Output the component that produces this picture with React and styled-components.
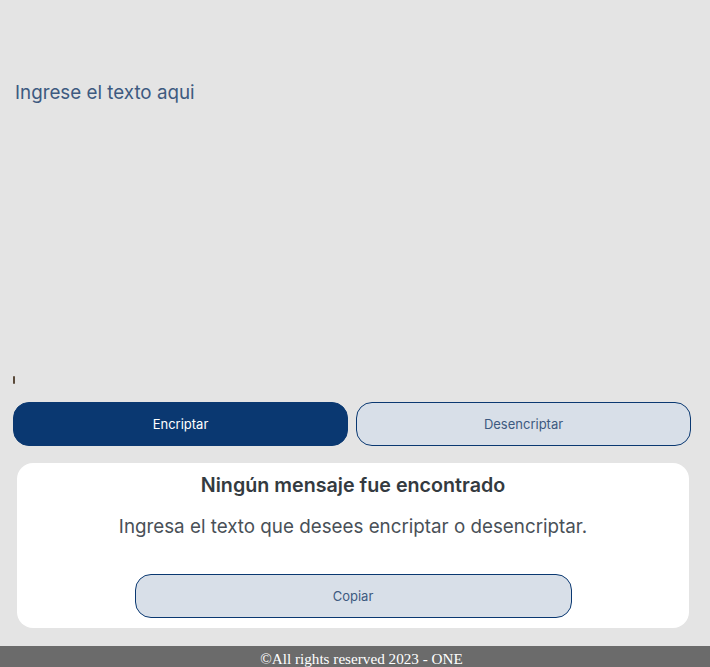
import React from "react";
import styled, { createGlobalStyle } from "styled-components";

const GlobalStyle = createGlobalStyle`
  html, body {
    margin: 0;
    padding: 0;
    background: #e4e4e4;
    font-family: Inter, "Noto Sans", sans-serif;
  }
`;

const Page = styled.div`
  display: flex;
  flex-direction: column;
  min-height: 667px;
`;

const Main = styled.main`
  flex: 1;
  display: flex;
  flex-direction: column;
  padding: 81px 19px 0 13px;
`;

const TextInput = styled.textarea`
  height: 288px;
  margin: 0 0 0 2px;
  padding: 0;
  border: none;
  outline: none;
  resize: none;
  background: transparent;
  font-family: Inter, sans-serif;
  font-size: 18.8px;
  line-height: 24px;
  color: #0a3871;
  &::placeholder {
    color: #3d5a80;
  }
`;

const Hint = styled.span`
  display: block;
  width: 2px;
  height: 8px;
  margin: 7px 0 0 0;
  border-radius: 1px;
  background: #5a4a3a;
`;

const ButtonRow = styled.div`
  display: grid;
  grid-template-columns: 1fr 1fr;
  gap: 8px;
  margin-top: 18px;
`;

const Button = styled.button`
  height: 44px;
  border-radius: 16px;
  border: 1px solid #0a3871;
  background: ${(p) => (p.$primary ? "#0a3871" : "#d8dfe8")};
  color: ${(p) => (p.$primary ? "#ffffff" : "#3d5a80")};
  font-family: Inter, sans-serif;
  font-size: 13px;
  cursor: pointer;
`;

const Card = styled.section`
  margin: 17px 2px 0 4px;
  background: #ffffff;
  border-radius: 16px;
  display: flex;
  flex-direction: column;
  align-items: center;
  padding: 10px 0 10px 0;
`;

const Title = styled.h2`
  margin: 0;
  font-size: 19.7px;
  line-height: 24px;
  font-weight: 600;
  color: #343a40;
`;

const Message = styled.p`
  margin: 18px 0 0 0;
  font-size: 18.8px;
  line-height: 24px;
  color: #495057;
`;

const CopyButton = styled(Button)`
  width: 437px;
  margin-top: 35px;
`;

const Footer = styled.footer`
  margin-top: 18px;
  height: 21px;
  padding-left: 13px;
  background: #6b6b6b;
  color: #ffffff;
  text-align: center;
  font-family: "Liberation Serif", serif;
  font-size: 15.2px;
  line-height: 26px;
  overflow: hidden;
`;

export default function App() {
  return (
    <Page>
      <GlobalStyle />
      <Main>
        <TextInput placeholder="Ingrese el texto aqui" />
        <Hint />
        <ButtonRow>
          <Button $primary>Encriptar</Button>
          <Button>Desencriptar</Button>
        </ButtonRow>
        <Card>
          <Title>Ningún mensaje fue encontrado</Title>
          <Message>Ingresa el texto que desees encriptar o desencriptar.</Message>
          <CopyButton>Copiar</CopyButton>
        </Card>
      </Main>
      <Footer>©All rights reserved 2023 - ONE</Footer>
    </Page>
  );
}
